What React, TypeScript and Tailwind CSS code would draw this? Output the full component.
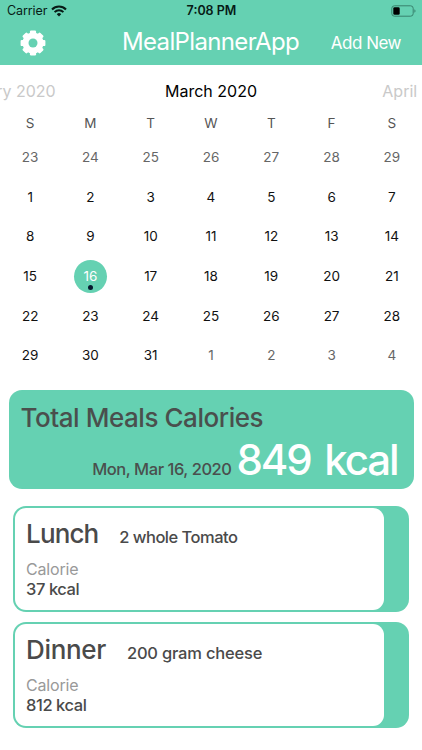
import clsx from "clsx";

type Meal = {
  title: string;
  description: string;
  calories: number;
  titleClass: string;
  descriptionClass: string;
};

const WEEKDAYS = ["S", "M", "T", "W", "T", "F", "S"];
const SELECTED_DAY = 16;

const meals: Meal[] = [
  {
    title: "Lunch",
    description: "2 whole Tomato",
    calories: 37,
    titleClass: "tracking-[-0.9px]",
    descriptionClass: "tracking-[-0.5px]",
  },
  {
    title: "Dinner",
    description: "200 gram cheese",
    calories: 812,
    titleClass: "tracking-[-0.35px]",
    descriptionClass: "tracking-[-0.2px]",
  },
];

// March 2020 starts on a Sunday, so a full leading week of February is shown.
const days = Array.from({ length: 42 }, (_, i) => {
  if (i < 7) return { day: 23 + i, outside: true };
  if (i < 38) return { day: i - 6, outside: false };
  return { day: i - 37, outside: true };
});

function GearIcon() {
  return (
    <svg viewBox="-13 -13 26 26" className="h-[26px] w-[26px]">
      <g fill="#fff">
        {[0, 45, 90, 135].map((angle) => (
          <rect
            key={angle}
            x="-3.1"
            y="-12.4"
            width="6.2"
            height="24.8"
            rx="1.2"
            transform={`rotate(${angle})`}
          />
        ))}
        <circle r="10.5" />
      </g>
      <circle r="4.5" fill="#65d1b2" />
    </svg>
  );
}

function WifiIcon() {
  return (
    <svg viewBox="0 0 16 12" className="h-3 w-4" fill="none" stroke="#071b16">
      <path d="M1 4.4a10 10 0 0 1 14 0" strokeWidth="2.1" />
      <path d="M3.6 7.1a6.2 6.2 0 0 1 8.8 0" strokeWidth="2" />
      <path d="M8 11.4 5.8 9.2a3.1 3.1 0 0 1 4.4 0z" fill="#071b16" stroke="none" />
    </svg>
  );
}

function BatteryIcon() {
  return (
    <svg viewBox="0 0 25 12" className="h-3 w-[25px]">
      <rect x="0.8" y="0.8" width="21.4" height="10.4" rx="2.6" fill="none" stroke="#38826d" />
      <rect x="2.3" y="2.3" width="6.4" height="7.4" rx="1.3" fill="#000" />
      <path d="M23.4 4.2c1.5.6 1.5 3 0 3.6z" fill="#38826d" />
    </svg>
  );
}

function Header() {
  return (
    <header className="h-[65px] bg-[#65d1b2]">
      <div className="grid h-[22px] grid-cols-3 items-center pr-[6px] pl-[7px] text-[#071b16]">
        <div className="flex items-center gap-[4px] text-[12.5px] tracking-[-0.1px]">
          <span>Carrier</span>
          <WifiIcon />
        </div>
        <span className="text-center text-[12.5px] font-semibold">7:08 PM</span>
        <div className="flex justify-end">
          <BatteryIcon />
        </div>
      </div>
      <div className="flex h-[42px] items-center pr-[21px] pl-5 text-white">
        <GearIcon />
        <h1 className="ml-[76px] pb-[3px] text-[24px] leading-[39px] tracking-[-0.65px] whitespace-nowrap">
          MealPlannerApp
        </h1>
        <button className="ml-auto text-[17px] leading-[42px] tracking-[-0.5px] whitespace-nowrap">
          Add New
        </button>
      </div>
    </header>
  );
}

function Calendar() {
  return (
    <section>
      <div className="grid h-[51px] grid-cols-3 items-center overflow-hidden text-[16px] whitespace-nowrap">
        <div className="flex justify-end pr-[85px] text-[#c9c9c9]">February 2020</div>
        <div className="text-center text-black">March 2020</div>
        <div className="pl-[101px] text-[#c9c9c9]">April 2020</div>
      </div>
      <div className="grid h-[14px] grid-cols-7 text-center text-[13.5px] leading-[14px] text-[#555]">
        {WEEKDAYS.map((name, i) => (
          <span key={i}>{name}</span>
        ))}
      </div>
      <div className="mt-[7.2px] grid auto-rows-[39.7px] grid-cols-7 text-[13.5px]">
        {days.map(({ day, outside }, i) => {
          const selected = !outside && day === SELECTED_DAY;
          return (
            <div key={i} className="flex items-center justify-center">
              <div
                className={clsx(
                  "relative flex h-[33px] w-[33px] items-center justify-center rounded-full",
                  selected && "bg-[#65d1b2] text-white",
                  !selected && (outside ? "text-[#666]" : "text-[#111]"),
                )}
              >
                {day}
                {selected && (
                  <span className="absolute bottom-[2.5px] left-[14px] h-[5px] w-[5px] rounded-full bg-[#06182e]" />
                )}
              </div>
            </div>
          );
        })}
      </div>
    </section>
  );
}

function Summary() {
  const total = meals.reduce((sum, meal) => sum + meal.calories, 0);

  return (
    <section className="mr-[8.5px] ml-[8.5px] mt-[14.6px] h-[99.5px] rounded-[13px] bg-[#65d1b2] pr-4 pl-3">
      <h2 className="pt-[11px] text-[26px] leading-[34px] font-medium tracking-[-0.45px] text-[#4a4f4d]">
        Total Meals Calories
      </h2>
      <div className="flex items-baseline justify-end gap-[5px] leading-[50px] font-medium whitespace-nowrap">
        <span className="text-[16.5px] tracking-[-0.45px] text-[#4a4f4d]">Mon, Mar 16, 2020</span>
        <span className="text-[42px] tracking-[-2.1px] text-white [word-spacing:4.5px]">
          {total} kcal
        </span>
      </div>
    </section>
  );
}

function MealCard({ meal }: { meal: Meal }) {
  return (
    <article className="h-[106px] rounded-[13px] bg-[#65d1b2] py-[2px] pr-[25px] pl-[2px]">
      <div className="h-full rounded-[11px] bg-white pl-[11.5px] text-[#4a4a4a]">
        <div className="flex items-baseline gap-[21px] pt-2 leading-[36px] font-medium">
          <h3 className={clsx("text-[26px]", meal.titleClass)}>{meal.title}</h3>
          <p className={clsx("text-[16.5px]", meal.descriptionClass)}>{meal.description}</p>
        </div>
        <p className="mt-1 text-[16px] leading-5 tracking-[-0.2px] text-[#999]">Calorie</p>
        <p className="text-[16.5px] leading-5 font-medium tracking-[-0.45px]">
          {meal.calories} kcal
        </p>
      </div>
    </article>
  );
}

export default function App() {
  return (
    <div className="h-[750px] w-[422px] overflow-hidden bg-white font-['Inter',sans-serif]">
      <Header />
      <Calendar />
      <Summary />
      <main className="mt-[16.7px] mr-[13px] ml-[12.6px] flex flex-col gap-[10px]">
        {meals.map((meal) => (
          <MealCard key={meal.title} meal={meal} />
        ))}
      </main>
    </div>
  );
}
